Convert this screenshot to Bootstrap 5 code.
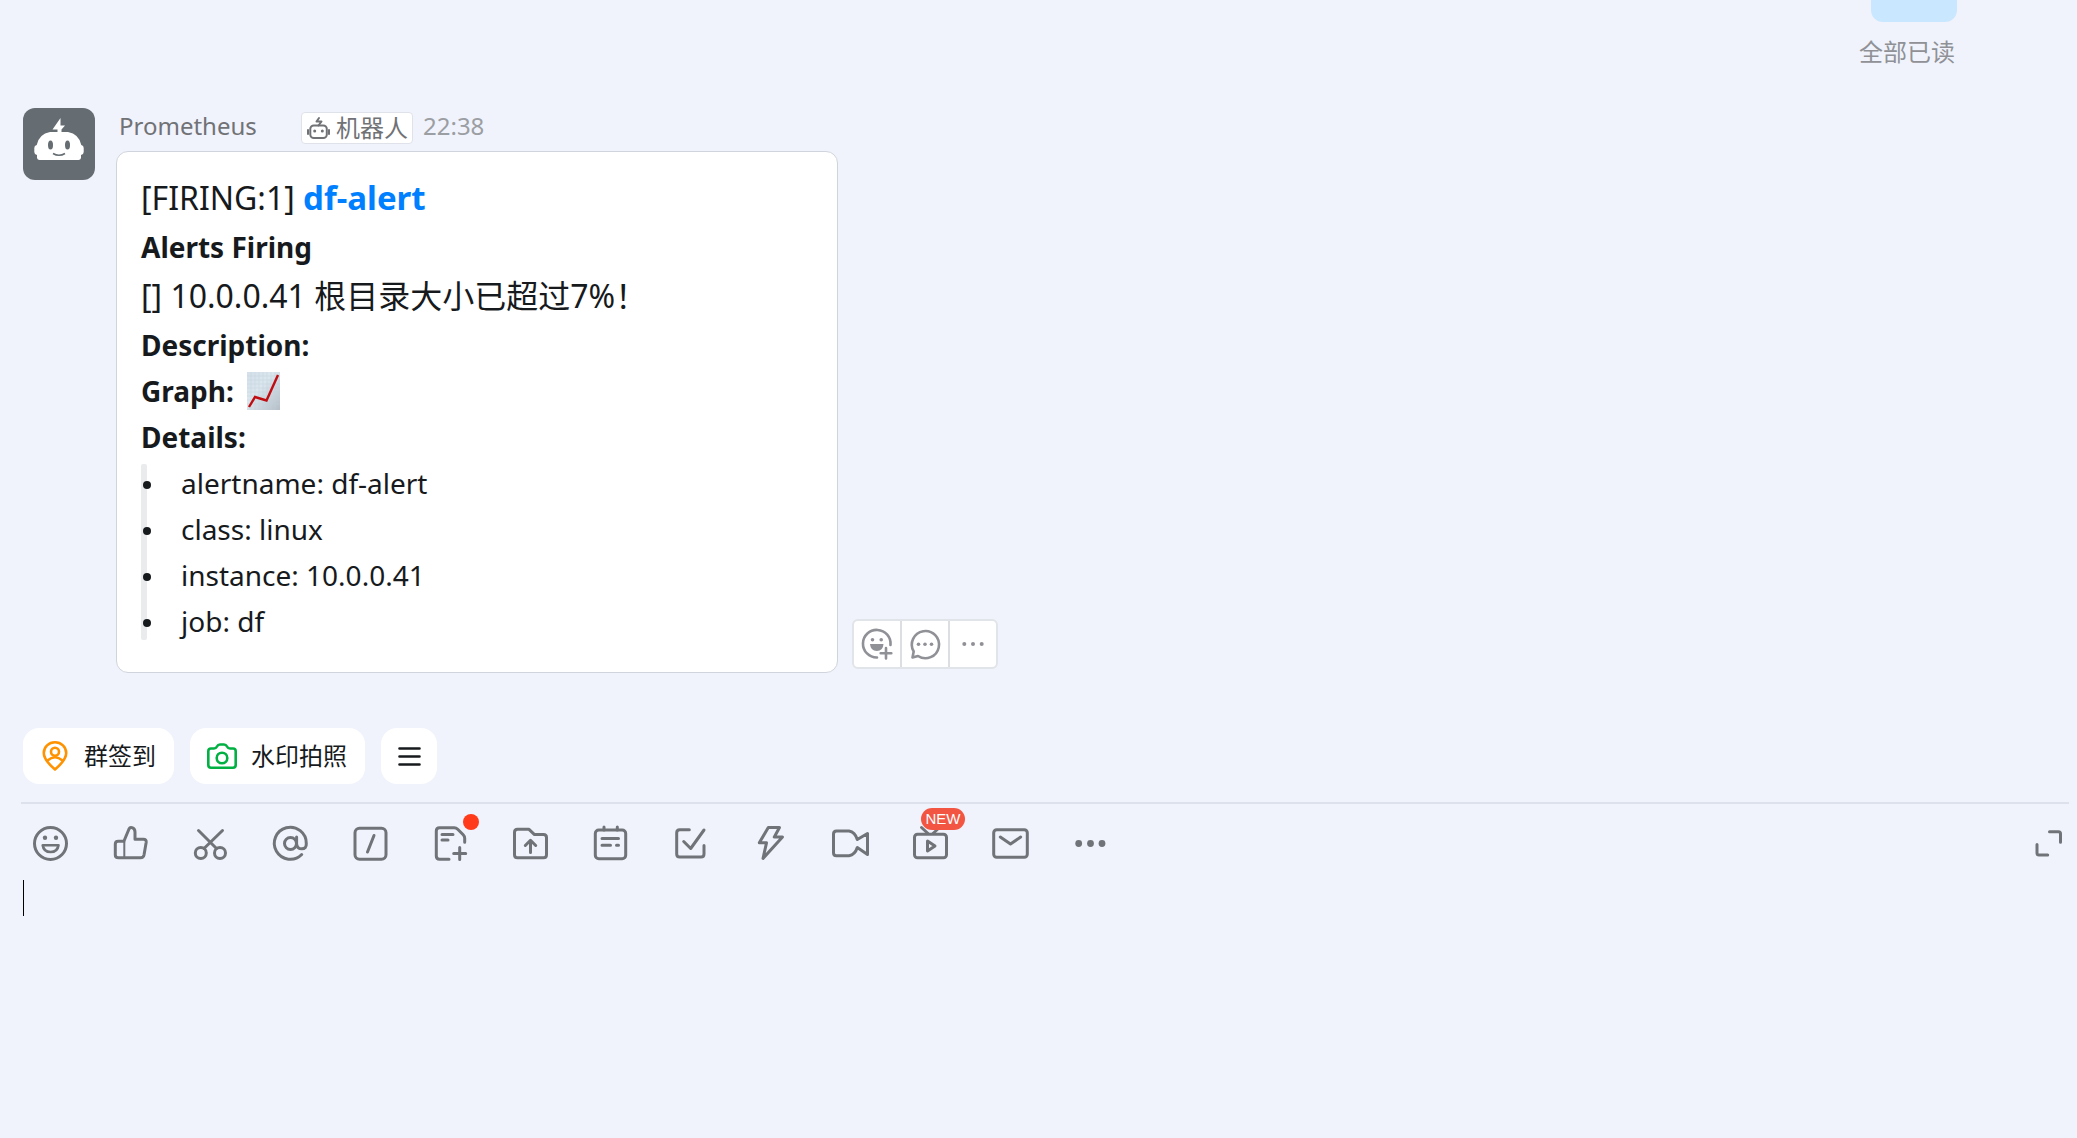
<!DOCTYPE html>
<html lang="zh-CN">
<head>
<meta charset="utf-8">
<meta name="viewport" content="width=device-width, initial-scale=1">
<title>群聊 - Prometheus</title>
<link href="https://cdn.jsdelivr.net/npm/bootstrap@5.3.0/dist/css/bootstrap.min.css" rel="stylesheet">
<style>
  body { background: #f0f3fb; color: #171a1d; font-family: "Noto Sans", "Noto Sans CJK SC", sans-serif; }
  svg { display: block; flex: none; }
  .ink { fill: none; stroke: currentColor; stroke-width: 3; stroke-linecap: round; stroke-linejoin: round; }
  .ink .solid { fill: currentColor; stroke: none; }
  .ink-thin, .ink .ink-thin { stroke-width: 2; }
  .ink-mid, .ink .ink-mid { stroke-width: 2.6; }
  .ink-orange { color: #ff9200; }
  .ink-green { color: #00b042; }

  .sent { padding-right: 120px; }
  .sent-bubble { width: 86px; height: 22px; background: #c9e7ff; border-radius: 0 0 12px 12px; }
  .read-state { margin-top: 12px; padding-right: 2px; color: #8f9196; font-size: 24px; line-height: 36px; }

  .message { padding-left: 23px; margin-top: 38px; }
  .avatar { width: 72px; height: 72px; border-radius: 12px; background: #656d73; }
  .message-body { margin-left: 21px; }
  .sender-line { height: 36px; padding-left: 3px; font-size: 24px; line-height: 36px; color: #707276; }
  .sender-name { width: 182px; }
  .bot-tag { height: 32px; padding: 0 4px; gap: 6px; background: #fff; border: 1px solid #dfe2e8; border-radius: 4px; line-height: 30px; }
  .sent-at { margin-left: 10px; color: #9b9ea3; }

  .alert-card { width: 722px; margin-top: 7px; padding: 20px 24px 28px; background: #fff; border: 1px solid #d0d4dc; border-radius: 12px; font-size: 28px; line-height: 46px; }
  .line-large { font-size: 32px; line-height: 52px; }
  .alert-card a { color: #007fff; font-size: 33px; }
  .graph-line { gap: 13px; }
  .detail-list { position: relative; padding-left: 2px; }
  .detail-list::before { content: ""; position: absolute; left: 0; top: 4px; bottom: 4px; width: 6px; border-radius: 2px; background: #e9ebed; }
  .detail-list li { position: relative; display: flex; align-items: center; gap: 30px; }
  .detail-list li::before { content: ""; width: 8px; height: 8px; margin-top: 3px; border-radius: 50%; background: #171a1d; }

  .hover-actions { margin-left: 14px; margin-bottom: 4px; background: #fff; border: 2px solid #e1e4e8; border-radius: 6px; }
  .hover-actions button { width: 46px; height: 46px; padding: 0; border: 0; background: none; color: #909197; display: flex; align-items: center; justify-content: center; }
  .hover-actions button + button { width: 48px; border-left: 2px solid #dcdee2; }

  .shortcuts { padding: 55px 23px 18px; gap: 16px; }
  .shortcut { height: 56px; padding: 0 18px 0 16px; border: 0; border-radius: 16px; background: #fff; color: #171a1d; font-size: 24px; gap: 13px; }
  .shortcut-menu { padding: 0 12px; }

  .composer { margin: 0 8px 0 21px; border-top: 2px solid #dde1eb; }
  .tools { height: 76px; padding-top: 2px; }
  .tool { width: 40px; height: 40px; padding: 0; border: 0; background: none; color: #707479; position: relative; }
  .tool-row { gap: 40px; padding-left: 9px; }
  .red-dot { position: absolute; left: 33px; top: -9px; width: 16px; height: 16px; border-radius: 50%; background: #ff3b1c; }
  .new-tag { position: absolute; left: 11px; top: -15px; width: 44px; height: 22px; border-radius: 11px; background: #f25643; color: #fff; font: 15px/22px "Liberation Sans", sans-serif; }
  .caret { width: 1px; height: 36px; margin-left: 2px; background: #000; }
  .entry { border: 0; background: transparent; resize: none; outline: 0; font-size: 28px; }
</style>
<script src="https://cdn.jsdelivr.net/npm/bootstrap@5.3.0/dist/js/bootstrap.bundle.min.js"></script>
</head>
<body class="d-flex flex-column min-vh-100">

<main>
  <section class="sent d-flex flex-column align-items-end">
    <div class="sent-bubble"></div>
    <div class="read-state">全部已读</div>
  </section>

  <article class="message d-flex">
    <div class="avatar">
      <svg width="72" height="72" viewBox="0 0 72 72" fill="#fff">
        <path d="M37.500 10 29.500 21.500h5V24H27q-11 2-13.300 13-2.400.5-2.400 3v4q0 2.500 2.700 3v3q.5 2 2.500 2h39q2 0 2.500-2v-3q2.700-.5 2.700-3v-4q0-2.500-2.400-3Q56 26 45 24h-6.500v-2.500L42 17.500h-4.500z"/>
        <ellipse cx="27.500" cy="37" rx="2.500" ry="4.500" fill="#656d73"/><ellipse cx="44.500" cy="37" rx="2.500" ry="4.500" fill="#656d73"/>
        <path d="M30 45.500q6 3.500 12 0" fill="none" stroke="#656d73" stroke-width="1.600"/>
      </svg>
    </div>
    <div class="message-body">
      <header class="sender-line d-flex align-items-center">
        <span class="sender-name">Prometheus</span>
        <span class="bot-tag d-flex align-items-center align-self-end">
          <svg class="ink ink-thin" width="24" height="24" viewBox="0 0 24 24"><rect x="4.300" y="9.500" width="16.500" height="12.500" rx="3.500"/><path d="M2 14v4M23 14v4M12.500 9.500l3-4h-5l2.500-3.500"/><circle class="solid" cx="8.700" cy="15" r="1.500"/><circle class="solid" cx="16.300" cy="15" r="1.500"/></svg>
          机器人
        </span>
        <time class="sent-at">22:38</time>
      </header>

      <div class="d-flex align-items-end">
        <div class="alert-card">
          <div class="line-large">[FIRING:1] <a href="#" class="fw-bold text-decoration-none">df-alert</a></div>
          <div class="fw-bold">Alerts Firing</div>
          <div class="line-large">[] 10.0.0.41 根目录大小已超过7%！</div>
          <div class="fw-bold">Description:</div>
          <div class="graph-line d-flex align-items-center"><span class="fw-bold">Graph:</span>
            <a href="#" aria-label="Graph">
              <svg width="33" height="38" viewBox="0 0 33 38">
                <defs><linearGradient id="paper" x1="0" y1="0" x2="1" y2="1"><stop offset="0" stop-color="#d3dfe9"/><stop offset=".4" stop-color="#dbe6ee"/><stop offset="1" stop-color="#b5bfc8"/></linearGradient></defs>
                <rect width="33" height="38" fill="url(#paper)"/>
                <path d="M4 0v38M8 0v38M12 0v38M16 0v38M20 0v38M24 0v38M28 0v38M0 4h33M0 8h33M0 12h33M0 16h33M0 20h33M0 24h33M0 28h33M0 32h33" stroke="#c3d0db" stroke-width=".4"/>
                <path d="M2 35l6-10 11.500 3.500L31 3" fill="none" stroke="#c00d12" stroke-width="2.400"/>
              </svg>
            </a>
          </div>
          <div class="fw-bold">Details:</div>
          <ul class="detail-list list-unstyled mb-0">
            <li>alertname: df-alert</li>
            <li>class: linux</li>
            <li>instance: 10.0.0.41</li>
            <li>job: df</li>
          </ul>
        </div>
        <div class="hover-actions d-flex">
          <button type="button" aria-label="表情回应"><svg class="ink" width="40" height="40" viewBox="0 0 40 40"><path class="ink-mid" d="M33.500 21A13.800 13.800 0 1 0 20 33.500M29 24v10.500M23.700 29.200h10.600"/><circle class="solid" cx="15.500" cy="15.700" r="1.800"/><circle class="solid" cx="24.200" cy="15.700" r="1.800"/><path class="solid" d="M13 20h13.500q-.5 7-6.700 7t-6.800-7z"/></svg></button>
          <button type="button" aria-label="回复"><svg class="ink" width="40" height="40" viewBox="0 0 40 40"><path class="ink-mid" d="M8.700 27.500A13.600 13.600 0 1 1 13 32L7.500 33.500z"/><circle class="solid" cx="13.500" cy="20.300" r="1.800"/><circle class="solid" cx="20" cy="20.300" r="1.800"/><circle class="solid" cx="26.500" cy="20.300" r="1.800"/></svg></button>
          <button type="button" aria-label="更多"><svg class="ink" width="40" height="40" viewBox="0 0 40 40"><circle class="solid" cx="11.300" cy="20" r="2"/><circle class="solid" cx="20" cy="20" r="2"/><circle class="solid" cx="28.700" cy="20" r="2"/></svg></button>
        </div>
      </div>
    </div>
  </article>
</main>

<nav class="shortcuts d-flex" aria-label="快捷应用">
  <button type="button" class="shortcut d-flex align-items-center"><svg class="ink ink-mid ink-orange" width="32" height="32" viewBox="0 0 32 32"><path d="M16 29.500Q4.800 20 4.800 13a11.200 10.700 0 0 1 22.400 0Q27.200 20 16 29.500z"/><circle cx="16" cy="11.700" r="4"/><path d="M8.500 20.500q7.500-6.500 15 0"/></svg>群签到</button>
  <button type="button" class="shortcut d-flex align-items-center"><svg class="ink ink-mid ink-green" width="32" height="32" viewBox="0 0 32 32"><path d="M5 8.500h3q2 0 3-2t3-2h4q2 0 3 2t3 2h3q2.700 0 2.700 2.700V25q0 2.700-2.700 2.700H5Q2.300 27.700 2.300 25V11.200Q2.300 8.500 5 8.500z"/><circle cx="16" cy="18" r="5.300"/></svg>水印拍照</button>
  <button type="button" class="shortcut shortcut-menu d-flex align-items-center" aria-label="菜单"><svg class="ink ink-mid" width="32" height="32" viewBox="0 0 32 32"><path d="M6.500 8.500h20M6.500 16.500h20M6.500 24.500h20"/></svg></button>
</nav>

<section class="composer d-flex flex-column flex-grow-1">
  <div class="tools d-flex align-items-center justify-content-between">
    <div class="tool-row d-flex">
      <button type="button" class="tool" aria-label="表情"><svg class="ink" width="40" height="40" viewBox="0 0 40 40"><circle cx="20.500" cy="20.500" r="16"/><circle class="solid" cx="15" cy="14.800" r="2.200"/><circle class="solid" cx="26" cy="14.800" r="2.200"/><path class="ink-mid" d="M12.700 22.200h15.800q-1 6.800-7.900 6.800t-7.900-6.800z"/></svg></button>
      <button type="button" class="tool" aria-label="点赞"><svg class="ink" width="40" height="40" viewBox="0 0 40 40"><path d="M14 18 19 6q1-2 3-1.300 3 1 3 4.300v7.200h8.500q3 0 2.700 3L34 32q-.6 2.800-3.500 2.800H8.500Q5.300 34.800 5.300 32V21q0-2.800 3-2.800H14z"/><path class="ink-thin" d="M14.300 19v15.500"/></svg></button>
      <button type="button" class="tool" aria-label="截图"><svg class="ink" width="40" height="40" viewBox="0 0 40 40"><path d="M8.500 7.500 26.500 25.500M32.500 7.500 14 25.500"/><circle cx="10.800" cy="30" r="5.500"/><circle cx="30" cy="30" r="5.500"/></svg></button>
      <button type="button" class="tool" aria-label="提及"><svg class="ink" width="40" height="40" viewBox="0 0 40 40"><path d="M31.700 31.500A16 16 0 1 1 36.300 20.500q.3 5.300-4.500 5.300t-5.200-5V14"/><circle cx="20.500" cy="20.500" r="6"/></svg></button>
      <button type="button" class="tool" aria-label="斜杠命令"><svg class="ink" width="40" height="40" viewBox="0 0 40 40"><rect x="5" y="5.300" width="31" height="31" rx="4.500"/><path d="M24 12.500 17.500 29"/></svg></button>
      <button type="button" class="tool" aria-label="新建文档"><svg class="ink" width="40" height="40" viewBox="0 0 40 40"><path d="M19 36.300H9.500Q6.300 36.300 6.300 33V8q0-3.300 3.200-3.300h14.700q2 0 3.500 1.500l5.500 5.500q1.500 1.500 1.500 3.500v4M12 11.500h11M12 17h6M29.700 24.500V36.500M23.700 30.500h12"/></svg><span class="red-dot"></span></button>
      <button type="button" class="tool" aria-label="文件"><svg class="ink" width="40" height="40" viewBox="0 0 40 40"><path d="M7.500 6.300H19l5.500 5.300h9q3 0 3 3v17.200q0 3-3 3h-26q-3 0-3-3V9.300q0-3 3-3zM20.500 29.500V18M15.300 22.500l5.200-5.200 5.200 5.200"/></svg></button>
      <button type="button" class="tool" aria-label="日程"><svg class="ink" width="40" height="40" viewBox="0 0 40 40"><rect x="5.300" y="7" width="30.400" height="28.700" rx="3.500"/><path d="M14 4v3M27.300 4v3M12 15.500h16.500M12 22.200h8.500M26.500 22.200h2"/></svg></button>
      <button type="button" class="tool" aria-label="待办"><svg class="ink" width="40" height="40" viewBox="0 0 40 40"><path d="M19.300 6.700H9.700q-3 0-3 3V31q0 3 3 3H31q3 0 3-3v-8.500M13.700 18.500l7 7L34 7"/></svg></button>
      <button type="button" class="tool" aria-label="闪电"><svg class="ink" width="40" height="40" viewBox="0 0 40 40"><path d="M18.300 4.500h11.200L24.300 14h8.200L13 35.500l3.500-15.700H9.300z"/></svg></button>
      <button type="button" class="tool" aria-label="视频会议"><svg class="ink" width="40" height="40" viewBox="0 0 40 40"><path d="M6.500 8H19q6 1 8.300 8.500l10.200-6v21l-10.200-7Q25 31.700 19 32.700H6.500q-3 0-3-3V11q0-3 3-3z"/></svg></button>
      <button type="button" class="tool" aria-label="直播"><svg class="ink" width="40" height="40" viewBox="0 0 40 40"><rect x="4.500" y="11.300" width="32" height="23.400" rx="3"/><path d="M11.500 4.500l6.500 6M29.500 4.500l-6.500 6M17.500 18l7.500 5-7.500 5z"/></svg><span class="new-tag">NEW</span></button>
      <button type="button" class="tool" aria-label="邮件"><svg class="ink" width="40" height="40" viewBox="0 0 40 40"><rect x="3.700" y="6.700" width="33.600" height="27.500" rx="3"/><path d="M10.300 14l10.200 7 10.200-7"/></svg></button>
      <button type="button" class="tool" aria-label="更多"><svg class="ink" width="40" height="40" viewBox="0 0 40 40"><circle class="solid" cx="8.700" cy="20.500" r="3.400"/><circle class="solid" cx="20.500" cy="20.500" r="3.400"/><circle class="solid" cx="32" cy="20.500" r="3.400"/></svg></button>
    </div>
    <button type="button" class="tool" aria-label="展开"><svg class="ink" width="40" height="40" viewBox="0 0 40 40"><path d="M20.500 8.700h9q2 0 2 2v8.500M8 21.500V30q0 2 2 2h8.700"/></svg></button>
  </div>
  <div class="d-flex flex-grow-1">
    <span class="caret"></span>
    <textarea class="entry flex-grow-1 p-0" aria-label="输入消息"></textarea>
  </div>
</section>

</body>
</html>
